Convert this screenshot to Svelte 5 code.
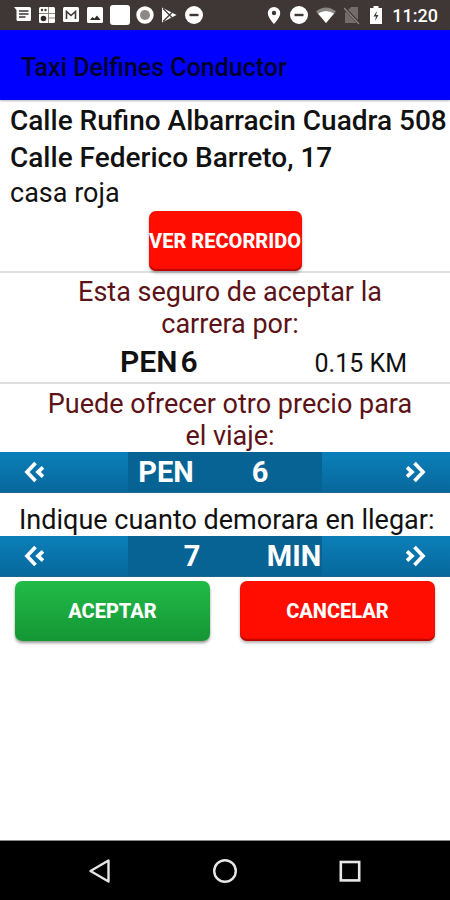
<script>
  let price = $state(6);
  let minutes = $state(7);

  function changePrice(step) {
    price = Math.max(0, price + step);
  }

  function changeMinutes(step) {
    minutes = Math.max(1, minutes + step);
  }
</script>

{#snippet chevrons(right)}
  <svg class:flip={right} width="20" height="22" viewBox="0 0 20 22" fill="none" stroke="#fff">
    <path d="M11.500 2 3 11l8.500 9" stroke-width="3.700" />
    <path d="m19 6.500-5 4.500 5 4.500" stroke-width="3.700" />
  </svg>
{/snippet}

{#snippet dnd(size)}
  <svg width={size} height="20" viewBox="0 0 18 20">
    <circle cx="9" cy="10" r="9" fill="#fff" />
    <path d="M4.500 10h9" stroke="#3e3735" stroke-width="2.400" />
  </svg>
{/snippet}

<div class="screen">
  <div class="status">
    <div class="notifications">
      <svg width="18" height="20" viewBox="0 0 18 20">
        <path d="M0 2h15.500q1.500 0 1.500 1.500v11q0 1.500-1.500 1.500H4q-1.500 0-1.500-1.500V5z" fill="#fff" />
        <path d="M5 6h9.500M5 9h9.500M5 12h6.500" stroke="#3e3735" stroke-width="1.500" />
      </svg>
      <svg width="18" height="20" viewBox="0 0 18 20">
        <rect x="1" y="2" width="16" height="16" rx="1.500" fill="#fff" />
        <path d="M1 8.500h16M10.500 2v16M10.500 13h6.500" stroke="#8e8785" stroke-width="1" />
        <circle cx="5.500" cy="13.500" r="2.800" fill="#2f2927" />
        <circle cx="4" cy="5" r="1.200" fill="#3e3735" />
        <circle cx="7.500" cy="5" r="1.200" fill="#3e3735" />
      </svg>
      <svg width="18" height="20" viewBox="0 0 18 20">
        <rect x="1" y="2" width="16" height="15" rx="1.500" fill="#fff" />
        <path d="M4.500 14V6.500L9 10.500l4.500-4V14" fill="none" stroke="#3e3735" stroke-width="1.600" />
      </svg>
      <svg width="18" height="20" viewBox="0 0 18 20">
        <rect x="1" y="2" width="16" height="16" rx="1.500" fill="#fff" />
        <path d="m4 15 2.500-3 2 1.500 2.500-3 3.500 4.500z" fill="#2f2927" />
      </svg>
      <svg width="20" height="20" viewBox="0 0 20 20">
        <rect width="20" height="20" rx="3" fill="#fff" />
      </svg>
      <svg width="18" height="20" viewBox="0 0 18 20">
        <circle cx="9" cy="10" r="7.300" fill="#fff" stroke="#fff" stroke-width="2.800" />
        <circle cx="9" cy="10" r="5" fill="#8d8886" />
      </svg>
      <svg width="18" height="20" viewBox="0 0 18 20">
        <path d="M2 2.500v15L16.500 10z" fill="#fff" />
        <path d="m3 3.500 9 9M3 16.500l9-9" stroke="#3e3735" stroke-width="1.200" />
      </svg>
      {@render dnd(20)}
    </div>
    <div class="system">
      <svg width="16" height="20" viewBox="0 0 16 20">
        <path d="M8 2a6.200 6.200 0 0 0-6.200 6.200C1.800 12.500 8 19 8 19s6.200-6.500 6.200-10.800A6.200 6.200 0 0 0 8 2z" fill="#fff" />
        <circle cx="8" cy="8" r="2.200" fill="#3e3735" />
      </svg>
      {@render dnd(18)}
      <svg width="20" height="20" viewBox="0 0 20 20">
        <path d="M0 6.500q10-8 20 0L10 18z" fill="#8b8785" />
        <path d="M2 8.500q8-5 16 0L10 18z" fill="#fff" />
      </svg>
      <svg width="16" height="20" viewBox="0 0 16 20">
        <path d="M14 2v16H1V8l6-6z" fill="#726d6b" />
        <path d="m0 2.500 15 16" stroke="#3e3735" stroke-width="3" />
        <path d="m0 3 15 16" stroke="#8b8785" stroke-width="1.300" />
      </svg>
      <svg width="16" height="20" viewBox="0 0 16 20">
        <path d="M2 3h3.500V1h5v2H14v16H2z" fill="#fff" />
        <path d="M9 6 5.500 11.500H8L7 16l3.500-6H8z" fill="#3e3735" />
      </svg>
      <time>11:20</time>
    </div>
  </div>

  <header>
    <h1>Taxi Delfines Conductor</h1>
  </header>

  <main>
    <section class="trip">
      <p class="address">Calle Rufino Albarracin Cuadra 508</p>
      <p class="address">Calle Federico Barreto, 17</p>
      <p class="note">casa roja</p>
      <button class="btn route" type="button">VER RECORRIDO</button>
    </section>

    <section class="fare">
      <h2>Esta seguro de aceptar la carrera por:</h2>
      <div class="quote">
        <div class="amount"><span>PEN</span><span>6</span></div>
        <span class="distance">0.15 KM</span>
      </div>
    </section>

    <section class="offer">
      <h2>Puede ofrecer otro precio para el viaje:</h2>
      <div class="stepper">
        <button type="button" aria-label="Bajar precio" onclick={() => changePrice(-1)}>
          {@render chevrons(false)}
        </button>
        <output class="price"><span>PEN</span><span>{price}</span></output>
        <button class="next" type="button" aria-label="Subir precio" onclick={() => changePrice(1)}>
          {@render chevrons(true)}
        </button>
      </div>
    </section>

    <section class="arrival">
      <p>Indique cuanto demorara en llegar:</p>
      <div class="stepper">
        <button type="button" aria-label="Menos minutos" onclick={() => changeMinutes(-1)}>
          {@render chevrons(false)}
        </button>
        <output class="minutes"><span>{minutes}</span><span>MIN</span></output>
        <button class="next" type="button" aria-label="Mas minutos" onclick={() => changeMinutes(1)}>
          {@render chevrons(true)}
        </button>
      </div>
    </section>

    <div class="actions">
      <button class="btn accept" type="button">ACEPTAR</button>
      <button class="btn" type="button">CANCELAR</button>
    </div>
  </main>

  <nav>
    <button type="button" aria-label="Atras">
      <svg width="24" height="26" viewBox="0 0 24 26" fill="none" stroke="#e6e6e6" stroke-width="2.400">
        <path d="M20.500 2.500v21L2.500 13z" stroke-linejoin="round" />
      </svg>
    </button>
    <button type="button" aria-label="Inicio">
      <svg width="24" height="26" viewBox="0 0 24 26" fill="none" stroke="#e6e6e6" stroke-width="2.400">
        <circle cx="12" cy="13" r="10.800" />
      </svg>
    </button>
    <button type="button" aria-label="Recientes">
      <svg width="24" height="26" viewBox="0 0 24 26" fill="none" stroke="#e6e6e6" stroke-width="2.600">
        <rect x="2.800" y="4" width="18.400" height="18.400" />
      </svg>
    </button>
  </nav>
</div>

<style>
  :global(body) {
    margin: 0;
    background: #fff;
  }
  .screen {
    display: flex;
    flex-direction: column;
    min-height: 100vh;
    font-family: Roboto, sans-serif;
    color: #111;
  }
  h1, h2, p {
    margin: 0;
  }
  button {
    margin: 0;
    padding: 0;
    border: 0;
    background: none;
    font-family: inherit;
    cursor: pointer;
  }
  svg {
    display: block;
    flex: none;
  }
  .status {
    display: flex;
    justify-content: space-between;
    height: 30px;
    padding: 0 12px 0 14px;
    background: #3e3735;
  }
  .notifications, .system {
    display: flex;
    align-items: center;
    gap: 6px;
  }
  .system {
    gap: 8px;
  }
  time {
    font-size: 18px;
    font-weight: 500;
    color: #fff;
  }
  header {
    display: flex;
    align-items: center;
    height: 70px;
    padding: 4px 21px 0;
    box-sizing: border-box;
    background: #00f;
    box-shadow: 0 1px 2px rgba(0, 0, 0, .3);
  }
  h1 {
    font-size: 25px;
    font-weight: 500;
    color: #00002e;
  }
  main {
    flex: 1;
  }
  .trip {
    display: flex;
    flex-direction: column;
    padding: 2px 0 0 10px;
    border-bottom: 2px solid #dcdfde;
  }
  .address, .note {
    font-size: 28px;
    line-height: 37px;
    white-space: nowrap;
  }
  .address {
    font-weight: 500;
  }
  .note {
    font-size: 27px;
    line-height: 35px;
  }
  .btn {
    height: 60px;
    border-radius: 7px;
    background: #fe0d00;
    box-shadow: inset 0 -2px 1px rgba(120, 0, 0, .5), 0 2px 3px rgba(0, 0, 0, .3);
    font-size: 20px;
    font-weight: 800;
    color: #fff;
  }
  .route {
    align-self: center;
    width: 153px;
    margin-right: 10px;
    white-space: nowrap;
  }
  .accept {
    background: linear-gradient(#22bb48, #149634);
    box-shadow: 0 2px 3px rgba(0, 0, 0, .4);
  }
  h2 {
    padding: 0 32px 0 42px;
    font-size: 27px;
    font-weight: 400;
    line-height: 32px;
    text-align: center;
    color: #5c1216;
  }
  .fare {
    padding-top: 3px;
    border-bottom: 2px solid #dcdfde;
  }
  .quote {
    display: flex;
    justify-content: space-between;
    align-items: baseline;
    padding: 4px 43px 0 120px;
    line-height: 36px;
  }
  .amount {
    display: flex;
    gap: 3px;
    font-size: 30px;
    font-weight: 600;
  }
  .distance {
    font-size: 25px;
  }
  .offer {
    padding-top: 4px;
  }
  .stepper {
    display: grid;
    grid-template-columns: 128px minmax(0, 1fr) 128px;
    height: 41px;
    background: linear-gradient(#0b7fba, #07689b);
    border-bottom: 1px solid #1c6590;
    box-sizing: border-box;
  }
  .stepper button {
    display: flex;
    align-items: center;
    padding: 0 24px;
  }
  .stepper .next {
    justify-content: flex-end;
  }
  .flip {
    transform: scaleX(-1);
  }
  output {
    display: grid;
    align-items: center;
    text-align: center;
    background: #066394;
    font-size: 29px;
    font-weight: 700;
    color: #fff;
  }
  .price {
    grid-template-columns: 76px 112px;
  }
  .minutes {
    grid-template-columns: 128px 76px;
  }
  .arrival {
    padding-top: 11px;
  }
  .arrival p {
    padding: 0 8px 0 19px;
    font-size: 27px;
    line-height: 32px;
    white-space: nowrap;
  }
  .actions {
    display: grid;
    grid-template-columns: 1fr 1fr;
    gap: 30px;
    padding: 4px 15px 20px;
  }
  nav {
    display: flex;
    justify-content: center;
    gap: 101px;
    height: 60px;
    border-top: 1px solid #888;
    box-sizing: border-box;
    background: #000;
  }
</style>
